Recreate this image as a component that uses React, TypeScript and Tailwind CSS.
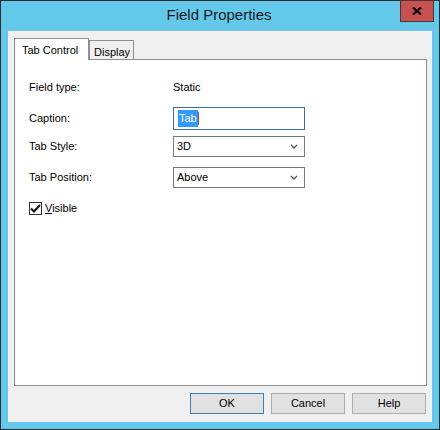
import React from "react";

const font = { fontFamily: '"Liberation Sans", Arial, sans-serif' };

function Chevron() {
  return (
    <svg width="8" height="5" viewBox="0 0 8 5" className="shrink-0">
      <path d="M1 1 L4 4 L7 1" fill="none" stroke="#555" strokeWidth="1.4" />
    </svg>
  );
}

function Select({ value }: { value: string }) {
  return (
    <div className="flex h-[21px] w-[132px] items-center justify-between border border-[#7a7a7a] bg-white pl-[3px] pr-[6px] text-[11px] text-black">
      <span>{value}</span>
      <Chevron />
    </div>
  );
}

function Row({ label, className, children }: { label: string; className: string; children: React.ReactNode }) {
  return (
    <div className={`flex items-center ${className}`}>
      <div className="w-[144px] text-[11px] text-black">{label}</div>
      {children}
    </div>
  );
}

export default function App() {
  return (
    <div className="relative h-[430px] w-[440px] border border-[#2b2b2b] bg-[#63c8ea]" style={font}>
      <div className="flex h-[30px] items-center justify-center border-b border-[#86bfdc] pr-[2px] text-[15px] text-[#1a1a1a]">
        Field Properties
      </div>
      <div className="absolute left-[399px] top-[-1px] flex h-[22px] w-[34px] items-center justify-center border border-[#4f3434] bg-[#c75050]">
        <svg width="10" height="8" viewBox="0 0 10 8">
          <path d="M1 0.5 L9 7.5 M9 0.5 L1 7.5" stroke="#000" strokeWidth="2.2" />
        </svg>
      </div>

      <div className="mx-[7px] flex h-[391px] flex-col bg-[#f0f0f0] pt-[7px]">
        <div className="flex h-[21px] items-end pl-[6px]">
          <div className="relative z-10 -mb-px flex h-[22px] w-[75px] items-start border border-b-0 border-[#8e8f94] bg-white pl-[7px] pt-[3px] text-[11px] text-black">
            Tab Control
          </div>
          <div className="flex h-[19px] w-[45px] items-start border border-b-0 border-[#8e8f94] bg-[#f0f0f0] pl-[4px] pt-[3px] text-[11px] text-black">
            Display
          </div>
        </div>

        <div className="ml-[6px] flex h-[327px] w-[413px] flex-col border border-[#8e8f94] bg-white pl-[14px]">
          <Row label="Field type:" className="mt-[16px] h-[22px]">
            <span className="text-[11px] text-black">Static</span>
          </Row>
          <Row label="Caption:" className="mt-[9px] h-[23px]">
            <div className="flex h-[23px] w-[132px] items-center border border-[#3c6e9e] bg-white pl-[4px] text-[11px]">
              <span className="bg-[#3399ff] px-px text-white">Tab</span>
              <span className="h-[13px] w-px bg-[#a0522d]" />
            </div>
          </Row>
          <Row label="Tab Style:" className="mt-[6px] h-[21px]">
            <Select value="3D" />
          </Row>
          <Row label="Tab Position:" className="mt-[10px] h-[21px]">
            <Select value="Above" />
          </Row>
          <div className="mt-[14px] flex h-[13px] items-center gap-[3px]">
            <div className="flex h-[13px] w-[13px] items-center justify-center border border-[#333] bg-white">
              <svg width="11" height="9" viewBox="0 0 11 9">
                <path d="M1 4.5 L4 7.5 L10 1" fill="none" stroke="#111" strokeWidth="2" />
              </svg>
            </div>
            <span className="text-[11px] text-black">
              <span className="underline">V</span>isible
            </span>
          </div>
        </div>

        <div className="mt-[7px] flex justify-end gap-[7px] pr-[6px]">
          <button className="h-[21px] w-[74px] border border-[#3c7fb1] bg-[#e1e1e1] text-[11px] text-black">OK</button>
          <button className="h-[21px] w-[74px] border border-[#adadad] bg-[#e1e1e1] text-[11px] text-black">Cancel</button>
          <button className="h-[21px] w-[74px] border border-[#adadad] bg-[#e1e1e1] text-[11px] text-black">Help</button>
        </div>
      </div>
    </div>
  );
}
